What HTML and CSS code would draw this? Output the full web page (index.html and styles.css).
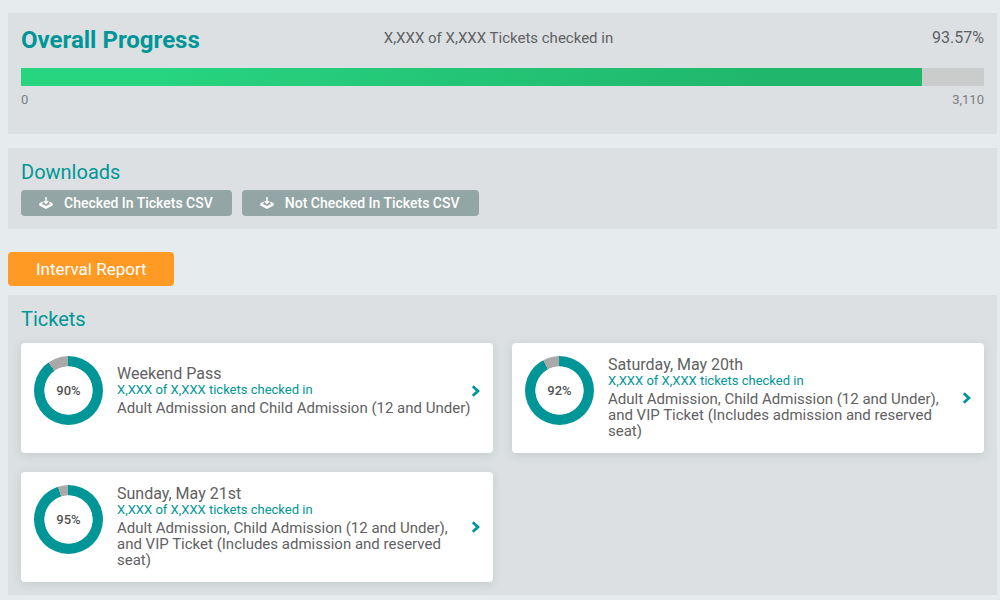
FILE: index.html
```html
<!DOCTYPE html>
<html lang="en">
<head>
  <meta charset="utf-8">
  <title>Check-in Progress</title>
  <link rel="stylesheet" href="styles.css">
</head>
<body>
  <svg class="sprite" aria-hidden="true">
    <symbol id="icon-download" viewBox="0 0 14 12">
      <path d="M7 0v6M4.800 4.200 7 6.300l2.200-2.100" fill="none" stroke="currentColor" stroke-width="1.500"/>
      <path d="M3.300 4.800 0.300 6.200v2.300L7 11.900l6.700-3.400V6.200l-3-1.400-.8 1.100 1.800.9L7 9.100 2.300 6.800l1.800-.9z" fill="currentColor"/>
    </symbol>
    <symbol id="icon-chevron" viewBox="0 0 10 12">
      <path d="M1.800 1.300 6.900 6 1.800 10.700" fill="none" stroke="currentColor" stroke-width="2.800"/>
    </symbol>
  </svg>

  <main class="page">
    <section class="panel panel-progress">
      <header class="progress-head">
        <h1 class="progress-title">Overall Progress</h1>
        <p class="progress-count">X,XXX of X,XXX Tickets checked in</p>
        <p class="progress-percent">93.57%</p>
      </header>
      <div class="bar" role="progressbar" aria-label="Overall Progress" aria-valuemin="0" aria-valuemax="100" aria-valuenow="93.57">
        <div class="bar-fill" style="width: 93.57%"></div>
      </div>
      <div class="scale"><span>0</span><span>3,110</span></div>
    </section>

    <section class="panel panel-downloads">
      <h2 class="panel-title">Downloads</h2>
      <div class="downloads">
        <button class="download" type="button"><svg class="download-icon" aria-hidden="true"><use href="#icon-download"/></svg>Checked In Tickets CSV</button>
        <button class="download" type="button"><svg class="download-icon" aria-hidden="true"><use href="#icon-download"/></svg>Not Checked In Tickets CSV</button>
      </div>
    </section>

    <button class="report" type="button">Interval Report</button>

    <section class="panel panel-tickets">
      <h2 class="panel-title">Tickets</h2>
      <div class="cards">
        <a class="card" href="#weekend">
          <span class="card-row">
            <span class="donut" style="--share: 90%"><span class="donut-label">90%</span></span>
            <span class="card-text">
              <span class="card-name">Weekend Pass</span>
              <span class="card-count">X,XXX of X,XXX tickets checked in</span>
              <span class="card-desc">Adult Admission and Child Admission (12 and Under)</span>
            </span>
            <svg class="chevron" aria-hidden="true"><use href="#icon-chevron"/></svg>
          </span>
        </a>
        <a class="card" href="#saturday">
          <span class="card-row">
            <span class="donut" style="--share: 92%"><span class="donut-label">92%</span></span>
            <span class="card-text">
              <span class="card-name">Saturday, May 20th</span>
              <span class="card-count">X,XXX of X,XXX tickets checked in</span>
              <span class="card-desc">Adult Admission, Child Admission (12 and Under), and VIP Ticket (Includes admission and reserved seat)</span>
            </span>
            <svg class="chevron" aria-hidden="true"><use href="#icon-chevron"/></svg>
          </span>
        </a>
        <a class="card" href="#sunday">
          <span class="card-row">
            <span class="donut" style="--share: 95%"><span class="donut-label">95%</span></span>
            <span class="card-text">
              <span class="card-name">Sunday, May 21st</span>
              <span class="card-count">X,XXX of X,XXX tickets checked in</span>
              <span class="card-desc">Adult Admission, Child Admission (12 and Under), and VIP Ticket (Includes admission and reserved seat)</span>
            </span>
            <svg class="chevron" aria-hidden="true"><use href="#icon-chevron"/></svg>
          </span>
        </a>
      </div>
    </section>
  </main>
</body>
</html>
```

FILE: styles.css
```css
:root {
  --teal: #009698;
  --text: #5f6163;
  --panel: #dce0e2;
}

* {
  box-sizing: border-box;
}

body {
  margin: 0;
  background: #e6ebee;
  color: var(--text);
  font-family: Roboto, "Liberation Sans", sans-serif;
  font-size: 15px;
}

h1, h2, p {
  margin: 0;
}

button {
  border: 0;
  font-family: inherit;
  color: #fff;
  cursor: pointer;
}

.sprite {
  position: absolute;
  width: 0;
  height: 0;
}

.page {
  display: flex;
  flex-direction: column;
  align-items: stretch;
  padding: 13px 3px 5px 8px;
}

.panel {
  padding: 12px 13px;
  background: var(--panel);
}

.panel-progress {
  padding-bottom: 26px;
}

.progress-head {
  display: grid;
  grid-template-columns: 1fr auto 1fr;
  align-items: start;
  height: 43px;
  font-size: 16px;
  line-height: 26px;
}

.progress-title {
  color: var(--teal);
  font-size: 24px;
  font-weight: 700;
  line-height: 30px;
}

.progress-count {
  padding-right: 8px;
  font-size: 15px;
}

.progress-percent {
  text-align: right;
}

.bar {
  height: 18px;
  background: #cacccb;
}

.bar-fill {
  height: 100%;
  background: linear-gradient(90deg, #27d480 15%, #20b66b 84%);
}

.scale {
  display: flex;
  justify-content: space-between;
  padding-top: 6px;
  color: #7c7e80;
  font-size: 13px;
  line-height: 16px;
}

.panel-downloads {
  margin-top: 14px;
  padding-bottom: 13px;
}

.panel-title {
  color: var(--teal);
  font-size: 20px;
  font-weight: 400;
  line-height: 24px;
}

.downloads {
  display: flex;
  gap: 10px;
  margin-top: 6px;
}

.download {
  display: flex;
  align-items: center;
  gap: 11px;
  height: 26px;
  padding: 0 19px 0 18px;
  border-radius: 4px;
  background: #93a5a4;
  font-size: 14px;
  font-weight: 500;
}

.download-icon {
  width: 14px;
  height: 12px;
}

.report {
  align-self: flex-start;
  height: 34px;
  margin: 23px 0 9px;
  padding: 0 27px 0 28px;
  border-radius: 4px;
  background: #ff9b25;
  font-size: 17px;
}

.panel-tickets {
  padding-bottom: 13px;
}

.cards {
  display: grid;
  grid-template-columns: 1fr 1fr;
  gap: 19px;
  margin-top: 12px;
}

.card {
  padding: 13px 12px 14px 13px;
  border-radius: 4px;
  background: #fff;
  box-shadow: 0 2px 10px rgba(60, 80, 75, 0.15);
  color: inherit;
  text-decoration: none;
}

.card-row {
  display: flex;
  align-items: center;
}

.donut {
  display: grid;
  flex: none;
  place-items: center;
  align-self: flex-start;
  width: 69px;
  height: 69px;
  margin-right: 14px;
  border-radius: 50%;
  background:
    radial-gradient(closest-side, #fff 69%, transparent 71%),
    conic-gradient(var(--teal) var(--share), #a9a9a9 0);
}

.donut-label {
  color: #505254;
  font-size: 13px;
  font-weight: 500;
}

.card-text {
  display: flex;
  flex: 1;
  flex-direction: column;
  min-width: 0;
}

.card-name {
  font-size: 16px;
  line-height: 17px;
}

.card-count {
  color: var(--teal);
  font-size: 13px;
  line-height: 15px;
}

.card-desc {
  margin-top: 3px;
  font-size: 15px;
  line-height: 16px;
}

.chevron {
  flex: none;
  width: 10px;
  height: 12px;
  color: var(--teal);
}
```
